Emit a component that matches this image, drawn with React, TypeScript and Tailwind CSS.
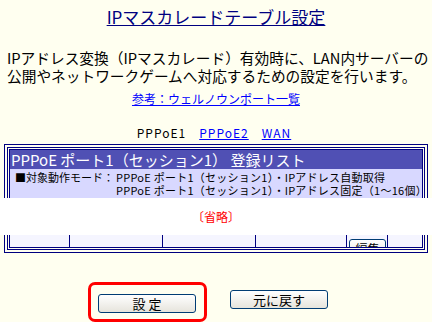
import React from "react";

const font = "font-['Noto_Sans_CJK_JP','Noto_Sans',sans-serif]";

function TableTop() {
  return (
    <div className="mx-[4px] border-x border-t border-[#000080] px-[2px] pt-[2px]">
      <div className="border-x border-t border-[#000080] px-[1px] pt-[1px]">
        <div className="border-x border-t border-[#000080]">
          <div className="h-[19px] bg-[#5050B4] pl-[1px] text-[15px] leading-[19px] text-white">
            PPPoE ポート1（セッション1） 登録リスト
          </div>
          <div className="flex h-[29px] overflow-hidden whitespace-nowrap bg-[#D8D8FF] pt-[2px] text-[11px] leading-[13px] text-black">
            <div className="w-[106px] shrink-0 pl-[5px]">■対象動作モード：</div>
            <div className="tracking-[0.25px]">
              <div>PPPoE ポート1（セッション1）・IPアドレス自動取得</div>
              <div>PPPoE ポート1（セッション1）・IPアドレス固定（1～16個）</div>
            </div>
          </div>
        </div>
      </div>
    </div>
  );
}

function TableBottom() {
  const cols = ["w-[60px]", "w-[93px]", "w-[93px]", "w-[91px]"];
  return (
    <div className="mx-[4px] border-x border-b border-[#000080] px-[2px] pb-[2px]">
      <div className="border-x border-b border-[#000080] px-[1px] pb-[1px]">
        <div className="flex h-[13px] overflow-hidden border-x border-b border-[#000080] bg-[#F5F5FF]">
          {cols.map((c, i) => (
            <div key={i} className={`${c} shrink-0 border-r border-[#000080]`} />
          ))}
          <div className="w-[41px] shrink-0 border-r border-[#000080] pl-[2px]">
            <button className="-mt-[9px] h-[19px] w-[37px] rounded-[3px] border border-[#003C74] bg-gradient-to-b from-white to-[#E6E4DC] text-[12px] leading-[17px] text-black">
              編集
            </button>
          </div>
          <div className="flex-1" />
        </div>
      </div>
    </div>
  );
}

export default function App() {
  return (
    <div className={`${font} h-[322px] w-[432px] overflow-hidden bg-[#FFFFF0] text-black`}>
      <h1 className="pt-[6px] text-center text-[17px] leading-[22px]">
        <a className="text-[#000080] underline">IPマスカレードテーブル設定</a>
      </h1>

      <p className="mt-[21px] whitespace-nowrap pl-[7px] text-[14.7px] leading-[18px]">
        IPアドレス変換（IPマスカレード）有効時に、LAN内サーバーの
        <br />
        公開やネットワークゲームへ対応するための設定を行います。
      </p>

      <div className="mt-[6px] text-center text-[12px] leading-[16px]">
        <a className="text-[#0000FF] underline">参考：ウェルノウンポート一覧</a>
      </div>

      <div className="mt-[18px] flex justify-center gap-[13px] pr-[4px] text-[12px] leading-[16px] tracking-[1px]">
        <span>PPPoE1</span>
        <a className="text-[#0000FF] underline">PPPoE2</a>
        <a className="text-[#0000FF] underline">WAN</a>
      </div>

      <div className="mt-[3px]">
        <TableTop />
        <div className="h-[37px] bg-white pt-[12px] text-center text-[12px] leading-[14px] text-[#FF0000] [font-feature-settings:'halt']">
          〔省略〕
        </div>
        <TableBottom />
      </div>

      <div className="mt-[37px] flex justify-center gap-[34px] pr-[6px]">
        <div className="relative">
          <div className="absolute -bottom-[8px] -left-[10px] -right-[11px] -top-[8px] rounded-[7px] border-[3px] border-[#FF0000]" />
          <button className="h-[19px] w-[98px] rounded-[3px] border border-[#003C74] bg-gradient-to-b from-white to-[#E6E4DC] text-[13px] leading-[17px] text-black">
            設 定
          </button>
        </div>
        <button className="h-[19px] w-[98px] rounded-[3px] border border-[#003C74] bg-gradient-to-b from-white to-[#E6E4DC] text-[13px] leading-[17px] text-black">
          元に戻す
        </button>
      </div>
    </div>
  );
}
